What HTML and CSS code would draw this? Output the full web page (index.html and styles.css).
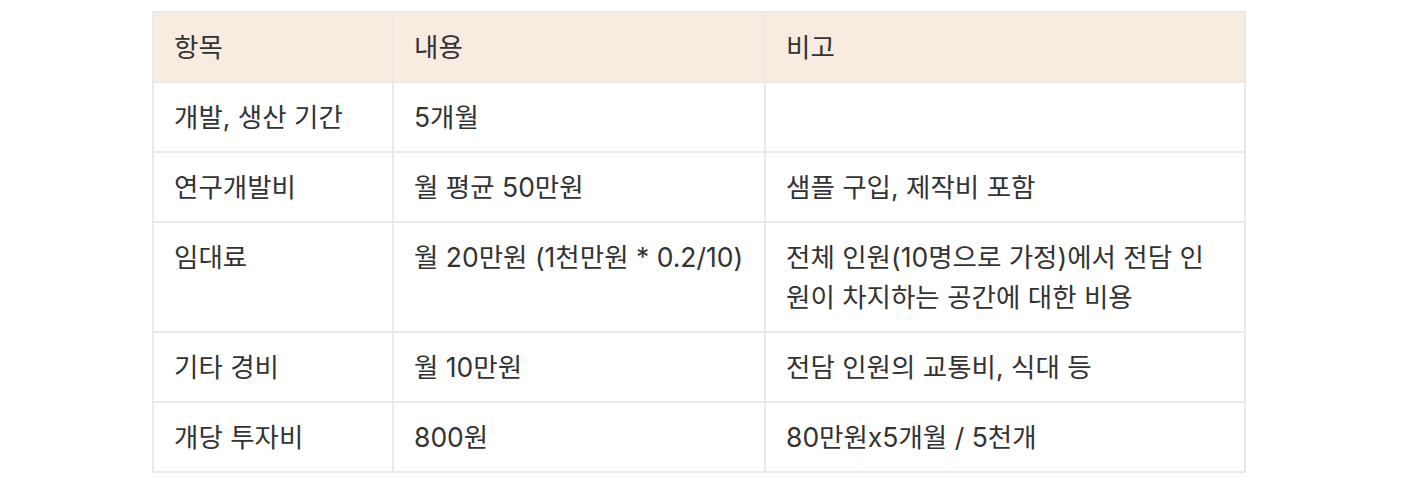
FILE: index.html
```html
<!DOCTYPE html>
<html lang="ko">
<head>
<meta charset="utf-8">
<link rel="stylesheet" href="styles.css">
</head>
<body>
<table class="info">
  <colgroup>
    <col class="c1">
    <col class="c2">
    <col class="c3">
  </colgroup>
  <thead>
    <tr><th>항목</th><th>내용</th><th>비고</th></tr>
  </thead>
  <tbody>
    <tr><td>개발, 생산 기간</td><td>5개월</td><td></td></tr>
    <tr><td>연구개발비</td><td>월 평균 50만원</td><td>샘플 구입, 제작비 포함</td></tr>
    <tr><td>임대료</td><td>월 20만원 (1천만원 * 0.2/10)</td><td>전체 인원(10명으로 가정)에서 전담 인원이 차지하는 공간에 대한 비용</td></tr>
    <tr><td>기타 경비</td><td>월 10만원</td><td>전담 인원의 교통비, 식대 등</td></tr>
    <tr><td>개당 투자비</td><td>800원</td><td>80만원x5개월 / 5천개</td></tr>
  </tbody>
</table>
</body>
</html>
```
FILE: styles.css
```css
html, body {
  margin: 0;
  padding: 0;
  background: #ffffff;
}
body {
  padding: 11px 0 0 152px;
  font-family: "Inter", "Noto Sans CJK KR", sans-serif;
  color: #333333;
}
.info {
  border-collapse: collapse;
  width: 1094px;
  table-layout: fixed;
  font-size: 26.5px;
  line-height: 40px;
}
.c1 { width: 240px; }
.c2 { width: 372px; }
.info th, .info td {
  border: 2px solid #e9e9e9;
  padding: 14px 20px;
  text-align: left;
  vertical-align: top;
  font-weight: 400;
  word-break: break-all;
}
.info thead th {
  background: #f8ebdf;
}
```
